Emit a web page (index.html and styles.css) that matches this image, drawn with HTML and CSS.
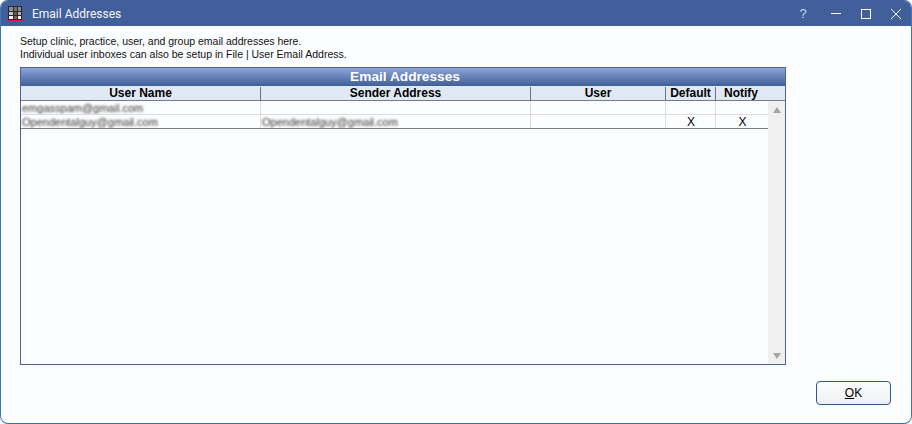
FILE: index.html
```html
<!DOCTYPE html>
<html lang="en">
<head>
<meta charset="utf-8">
<title>Email Addresses</title>
<link rel="stylesheet" href="styles.css">
</head>
<body>
<div class="window">
  <header class="titlebar">
    <svg class="app-icon" width="18" height="18" viewBox="0 0 18 18">
      <rect x="1" y="0" width="14" height="14" fill="#2a2a2a"/>
      <rect x="2" y="1" width="4" height="4" fill="#8f8f8f"/>
      <rect x="7" y="1" width="3" height="4" fill="#6f6f6f"/>
      <rect x="11" y="1" width="3" height="4" fill="#8a8a8a"/>
      <rect x="2" y="6" width="4" height="3" fill="#c4c4c4"/>
      <rect x="7" y="6" width="3" height="3" fill="#5a5a5a"/>
      <rect x="11" y="6" width="3" height="3" fill="#b0b0b0"/>
      <rect x="2" y="10" width="4" height="3" fill="#f6f6f6"/>
      <rect x="7" y="10" width="3" height="3" fill="#6a6a6a"/>
      <rect x="11" y="10" width="3" height="3" fill="#f6f6f6"/>
      <rect x="1" y="14" width="14" height="1" fill="#ff0a14"/>
    </svg>
    <span class="title">Email Addresses</span>
    <div class="controls">
      <span class="help">?</span>
      <svg class="ctl" width="12" height="12" viewBox="0 0 12 12"><path d="M1 4.5H11" stroke="#fff" fill="none"/></svg>
      <svg class="ctl" width="12" height="12" viewBox="0 0 12 12"><rect x="1.5" y="0.5" width="9" height="9" stroke="#fff" fill="none"/></svg>
      <svg class="ctl" width="12" height="12" viewBox="0 0 12 12"><path d="M1 0L11 10M11 0L1 10" stroke="#fff" fill="none"/></svg>
    </div>
  </header>
  <main class="content">
    <p class="intro">Setup clinic, practice, user, and group email addresses here.<br>Individual user inboxes can also be setup in File | User Email Address.</p>
    <section class="grid">
      <div class="grid-title">Email Addresses</div>
      <div class="cols head">
        <div class="hcell">User Name</div>
        <div class="hcell">Sender Address</div>
        <div class="hcell">User</div>
        <div class="hcell">Default</div>
        <div class="hcell last">Notify</div>
      </div>
      <div class="body">
        <div class="rows">
          <div class="cols row">
            <div class="cell"><span class="blur">emgasspam@gmail.com</span></div>
            <div class="cell"></div>
            <div class="cell"></div>
            <div class="cell"></div>
            <div class="cell last"></div>
          </div>
          <div class="cols row">
            <div class="cell"><span class="blur">Opendentalguy@gmail.com</span></div>
            <div class="cell"><span class="blur">Opendentalguy@gmail.com</span></div>
            <div class="cell"></div>
            <div class="cell mark">X</div>
            <div class="cell mark last">X</div>
          </div>
        </div>
        <div class="scrollbar">
          <span class="arrow up"></span>
          <span class="arrow down"></span>
        </div>
      </div>
    </section>
    <div class="actions"><button class="ok" type="button"><u>O</u>K</button></div>
  </main>
</div>
</body>
</html>
```
FILE: styles.css
```css
* { box-sizing: border-box; }
html, body { margin: 0; height: 100%; }
body { font-family: "Liberation Sans", Arial, sans-serif; font-size: 11px; color: #000; background: #fff; overflow: hidden; }
.window { width: 912px; height: 424px; display: flex; flex-direction: column; background: #fcfdfe; border: 1px solid #41609b; border-left-color: #3f78b5; border-right-color: #3f78b5; border-bottom-color: #3d6ca6; border-radius: 8px; overflow: hidden; }
.titlebar { height: 25px; flex: none; display: flex; align-items: center; background: #41609b; color: #fff; padding-left: 6px; }
.app-icon { flex: none; margin-top: 3px; }
.title { margin-left: 7px; font-family: Roboto, "Liberation Sans", sans-serif; font-size: 12px; color: #f4f6fa; }
.controls { margin-left: auto; display: flex; align-items: center; height: 100%; padding-right: 9px; }
.help { width: 12px; text-align: center; font-size: 13px; color: #c9d8f0; margin-right: 21px; }
.ctl { flex: none; margin-left: 18px; margin-top: 2px; }
.help + .ctl { margin-left: 0; }
.content { flex: 1; display: flex; flex-direction: column; padding: 8px 125px 0 19px; }
.intro { margin: 0; font-size: 10.5px; line-height: 13px; height: 33px; padding-top: 1px; color: #111; }
.grid { height: 298px; display: flex; flex-direction: column; border: 1px solid #4a6591; background: #fcfdfe; }
.grid-title { height: 18px; flex: none; background: linear-gradient(#8ea4d8, #3f5f98); color: #fff; font-weight: bold; font-size: 13.7px; line-height: 18px; text-align: center; padding-left: 4px; }
.cols { display: grid; grid-template-columns: 240px 270px 135px 50px 1fr; }
.head { height: 15px; flex: none; background: #e0e9f3; border-bottom: 1px solid #757c88; }
.hcell { font-weight: bold; font-size: 12px; line-height: 13px; text-align: center; position: relative; border-right: 1px solid #6d737c; height: 13px; margin-top: 1px; }
.hcell.last { border-right: none; margin-right: 19px; }
.body { flex: 1; display: flex; min-height: 0; }
.rows { flex: 1; min-width: 0; }
.scrollbar { width: 17px; flex: none; background: #f0f0f0; display: flex; flex-direction: column; justify-content: space-between; align-items: center; padding: 6px 0 5px; }
.arrow { width: 0; height: 0; border-left: 4px solid transparent; border-right: 4px solid transparent; }
.up { border-bottom: 6px solid #a6a6a6; }
.down { border-top: 6px solid #a6a6a6; }
.row { height: 14px; border-bottom: 1px solid #dcdcdc; }
.row:last-child { border-bottom: 1px solid #757c88; }
.cell { border-right: 1px solid #dcdcdc; line-height: 13px; padding-left: 1px; white-space: nowrap; overflow: hidden; }
.cell.last { border-right: none; }
.mark { text-align: center; font-size: 12px; line-height: 14px; }
.blur { font-size: 11px; line-height: 14px; color: #333; filter: blur(1.3px); display: inline-block; }
.actions { display: flex; justify-content: flex-end; padding: 16px 0 0; margin-right: -105px; }
.ok { width: 75px; height: 24px; padding: 0; font: 12px "Liberation Sans", Arial, sans-serif; color: #000; background: linear-gradient(#fdfdfe, #edf0f3); border: 1px solid #2d5a8e; border-radius: 4px; }
```
